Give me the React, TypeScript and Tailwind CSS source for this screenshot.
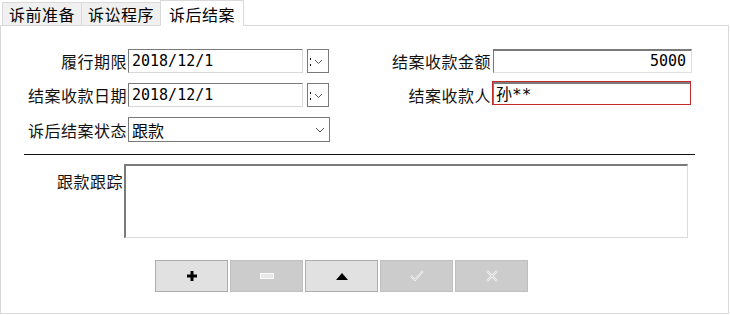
import React from "react";

const cjk = "font-['Noto_Sans_CJK_SC','Noto_Sans',sans-serif]";
const mono = "font-['DejaVu_Sans_Mono','Liberation_Mono',monospace]";

type Tab = { name: string; active?: boolean };

const Tabs: Tab[] = [
  { name: "诉前准备" },
  { name: "诉讼程序" },
  { name: "诉后结案", active: true },
];

function DropBtn() {
  return (
    <div className="ml-[4px] w-[22px] h-[24px] border border-[#7a7a7a] bg-white flex items-center">
      <svg width="20" height="22" viewBox="0 0 20 22">
        <rect x="2" y="8" width="1" height="2" fill="#000" />
        <rect x="2" y="14" width="1" height="2" fill="#000" />
        <path d="M7 10 L10.5 13.5 L14 10" fill="none" stroke="#555" strokeWidth="1" />
      </svg>
    </div>
  );
}

function DateInput({ value }: { value: string }) {
  return (
    <div className="flex items-center">
      <div
        className={`w-[175px] h-[24px] border border-t-[#7a7a7a] border-l-[#7a7a7a] border-b-[#d8d8d8] border-r-[#d8d8d8] bg-white pl-[3px] text-[15px] leading-[22px] text-black ${mono}`}
      >
        {value}
      </div>
      <DropBtn />
    </div>
  );
}

function Label({ text, w }: { text: string; w: string }) {
  return (
    <div className={`${w} text-right text-[16px] tracking-[0.5px] text-[#111] pr-[1px] ${cjk}`}>{text}</div>
  );
}

function ToolBtn({ enabled, children }: { enabled: boolean; children: React.ReactNode }) {
  return (
    <div
      className={`w-[73px] h-[32px] flex items-center justify-center border ${
        enabled ? "bg-[#e1e1e1] border-[#adadad]" : "bg-[#cccccc] border-[#bfbfbf]"
      }`}
    >
      {children}
    </div>
  );
}

export default function App() {
  return (
    <div className={`w-[730px] h-[315px] bg-white ${cjk}`}>
      {/* tab strip */}
      <div className="flex h-[25px] pl-[2px]">
        {Tabs.map((t) =>
          t.active ? (
            <div
              key={t.name}
              className="w-[84px] h-[26px] -mb-px relative z-10 bg-white border border-b-0 border-[#d9d9d9] flex items-center justify-center text-[16px] tracking-[0.5px] text-black"
            >
              {t.name}
            </div>
          ) : (
            <div
              key={t.name}
              className="w-[80px] h-[23px] mt-[2px] bg-[#f0f0f0] border border-b-0 border-[#d9d9d9] -mr-px flex items-center justify-center text-[16px] tracking-[0.5px] text-black"
            >
              {t.name}
            </div>
          )
        )}
      </div>

      {/* panel */}
      <div className="w-[729px] h-[289px] border border-[#d9d9d9] bg-white flex flex-col pt-[23px]">
        <div className="flex items-center h-[24px]">
          <Label text="履行期限" w="w-[127px]" />
          <DateInput value="2018/12/1" />
          <Label text="结案收款金额" w="w-[163px]" />
          <div
            className={`ml-[1px] w-[199px] h-[24px] border border-t-2 border-t-[#7a7a7a] border-l-[#7a7a7a] border-b-[#e0e0e0] border-r-[#e0e0e0] bg-white text-right pr-[5px] text-[15px] leading-[20px] text-black ${mono}`}
          >
            5000
          </div>
        </div>

        <div className="flex items-center h-[24px] mt-[10px]">
          <Label text="结案收款日期" w="w-[127px]" />
          <DateInput value="2018/12/1" />
          <Label text="结案收款人" w="w-[163px]" />
          <div className="w-[199px] h-[24px] -mt-[4px] border border-[#c42b2b] bg-white">
            <div className="h-full border-t-2 border-l border-t-[#7a7a7a] border-l-[#7a7a7a] pl-[2px] text-[16px] leading-[19px] text-black">
              孙<span className={mono}>**</span>
            </div>
          </div>
        </div>

        <div className="flex items-center h-[25px] mt-[10px]">
          <Label text="诉后结案状态" w="w-[127px]" />
          <div className="w-[202px] h-[25px] border border-[#7a7a7a] bg-white flex items-center justify-between pl-[3px] pr-[4px] text-[16px] text-black">
            <span>跟款</span>
            <svg width="10" height="8" viewBox="0 0 10 8">
              <path d="M1 2 L5 6 L9 2" fill="none" stroke="#555" strokeWidth="1" />
            </svg>
          </div>
        </div>

        <div className="ml-[23px] w-[671px] h-px bg-[#111] mt-[12px]" />

        <div className="flex mt-[9px]">
          <div className="w-[123px] text-right text-[16px] tracking-[0.5px] text-[#111] pt-[5px] pr-[1px]">跟款跟踪</div>
          <div className="w-[564px] h-[74px] border border-t-2 border-l-2 border-t-[#7a7a7a] border-l-[#7a7a7a] border-b-[#dcdcdc] border-r-[#dcdcdc] bg-white" />
        </div>

        <div className="flex gap-[2px] ml-[154px] mt-[22px]">
          <ToolBtn enabled>
            <svg width="10" height="10" viewBox="0 0 10 10">
              <path d="M3.5 0 H6.5 V3.5 H10 V6.5 H6.5 V10 H3.5 V6.5 H0 V3.5 H3.5 Z" fill="#000" />
            </svg>
          </ToolBtn>
          <ToolBtn enabled={false}>
            <svg width="14" height="6" viewBox="0 0 14 6">
              <rect x="0.5" y="0.5" width="13" height="5" fill="#e8e8e8" stroke="#fafafa" />
            </svg>
          </ToolBtn>
          <ToolBtn enabled>
            <svg width="12" height="7" viewBox="0 0 12 7">
              <path d="M0 7 L6 0 L12 7 Z" fill="#000" />
            </svg>
          </ToolBtn>
          <ToolBtn enabled={false}>
            <svg width="14" height="12" viewBox="0 0 14 12">
              <path d="M1 6 L5 10 L13 1" fill="none" stroke="#f2f2f2" strokeWidth="2.2" />
              <path d="M1 6 L5 10 L13 1" fill="none" stroke="#bdbdbd" strokeWidth="0.6" />
            </svg>
          </ToolBtn>
          <ToolBtn enabled={false}>
            <svg width="12" height="12" viewBox="0 0 12 12">
              <path d="M1 1 L11 11 M11 1 L1 11" fill="none" stroke="#f2f2f2" strokeWidth="2.4" />
              <path d="M1 1 L11 11 M11 1 L1 11" fill="none" stroke="#bdbdbd" strokeWidth="0.6" />
            </svg>
          </ToolBtn>
        </div>
      </div>
    </div>
  );
}
